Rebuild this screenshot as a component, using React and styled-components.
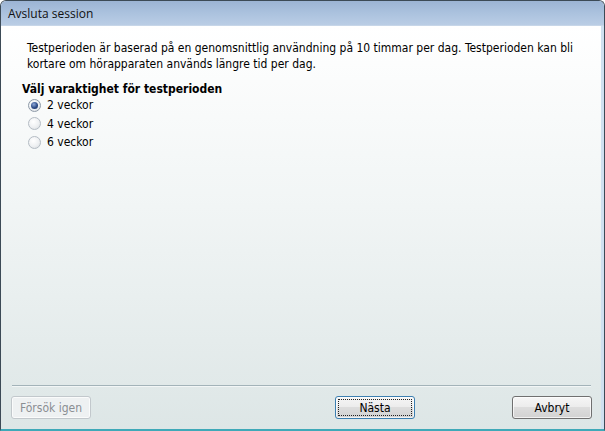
import React from "react";
import styled, { createGlobalStyle } from "styled-components";

const Global = createGlobalStyle`
  html, body { margin: 0; padding: 0; background: #ffffff; }
  body { width: 605px; height: 431px; overflow: hidden; }
  #root { width: 605px; height: 431px; }
`;

const Window = styled.div`
  box-sizing: border-box;
  width: 605px;
  height: 431px;
  display: flex;
  flex-direction: column;
  border: 1px solid #3c4a56;
  border-bottom: 2px solid #3fa9b8;
  border-radius: 6px 6px 0 0;
  overflow: hidden;
  font-family: "DejaVu Sans Condensed", "DejaVu Sans", sans-serif;
  font-size: 12px;
  color: #000;
`;

const TitleBar = styled.div`
  height: 24px;
  flex: none;
  display: flex;
  align-items: center;
  padding-left: 7px;
  background: linear-gradient(to bottom, #9cb4d4 0%, #abc2de 50%, #bacde5 100%);
  font-family: "Open Sans", "Noto Sans", sans-serif;
  font-size: 12px;
  color: #111;
  border-bottom: 1px solid #c7d6e8;
`;

const Body = styled.div`
  flex: 1;
  display: flex;
  flex-direction: column;
  background: linear-gradient(to bottom, #ffffff 0%, #f1f5f5 45%, #dde6e6 100%);
  border-right: 3px solid #cfe0f0;
`;

const Content = styled.div`
  flex: 1;
  padding: 14px 12px 0 21px;
`;

const Intro = styled.p`
  margin: 0 0 0 5px;
  line-height: 16px;
`;

const Heading = styled.div`
  margin-top: 9px;
  font-weight: bold;
  line-height: 16px;
`;

const Options = styled.div`
  display: grid;
  grid-auto-rows: 18.5px;
  margin-top: -1px;
  padding-left: 6px;
`;

const Option = styled.label`
  display: flex;
  align-items: center;
  gap: 6px;
`;

const Radio = styled.span`
  box-sizing: border-box;
  width: 13px;
  height: 13px;
  border-radius: 50%;
  border: 1px solid ${(p) => (p.$checked ? "#8e9aa8" : "#b4bcc4")};
  background: radial-gradient(circle at 40% 35%, #ffffff 0%, #eef0f2 55%, #d4d8dc 100%);
  display: flex;
  align-items: center;
  justify-content: center;
  &::after {
    content: "";
    width: 7px;
    height: 7px;
    border-radius: 50%;
    display: ${(p) => (p.$checked ? "block" : "none")};
    background: radial-gradient(circle at 40% 35%, #8ea8d8 0%, #2c4a86 55%, #1c2f5c 100%);
  }
`;

const Footer = styled.div`
  padding: 0 9px 10px 10px;
`;

const Separator = styled.div`
  height: 1px;
  background: #a3b3b9;
  border-bottom: 1px solid #f2f6f6;
  margin: 0 1px 9px 1px;
`;

const ButtonRow = styled.div`
  display: flex;
  align-items: center;
`;

const Button = styled.button`
  box-sizing: border-box;
  position: relative;
  width: 80px;
  height: 23px;
  border-radius: 3px;
  border: 1px solid ${(p) => (p.disabled ? "#c2c8cc" : p.$default ? "#3c7fb1" : "#707070")};
  background: ${(p) =>
    p.disabled
      ? "#eef1f2"
      : "linear-gradient(to bottom, #f6f6f6 0%, #ececec 48%, #dddddd 50%, #d2d2d2 100%)"};
  color: ${(p) => (p.disabled ? "#8a8e92" : "#000")};
  font-family: "DejaVu Sans Condensed", "DejaVu Sans", sans-serif;
  font-size: 12px;
  padding: 0;
  margin-left: ${(p) => p.$ml || "0"};
  box-shadow: inset 0 0 0 1px rgba(255, 255, 255, 0.7);
  &::after {
    content: "";
    display: ${(p) => (p.$default ? "block" : "none")};
    position: absolute;
    inset: 2px;
    border: 1px dotted #222;
  }
`;

const Spacer = styled.div`
  flex: 1;
`;

export default function App() {
  const options = ["2 veckor", "4 veckor", "6 veckor"];
  return (
    <>
      <Global />
      <Window>
        <TitleBar>Avsluta session</TitleBar>
        <Body>
          <Content>
            <Intro>
              Testperioden är baserad på en genomsnittlig användning på 10 timmar per dag. Testperioden kan bli
              kortare om hörapparaten används längre tid per dag.
            </Intro>
            <Heading>Välj varaktighet för testperioden</Heading>
            <Options>
              {options.map((o, i) => (
                <Option key={o}>
                  <Radio $checked={i === 0} />
                  {o}
                </Option>
              ))}
            </Options>
          </Content>
          <Footer>
            <Separator />
            <ButtonRow>
              <Button disabled>Försök igen</Button>
              <Spacer />
              <Button $default>Nästa</Button>
              <Button $ml="97px">Avbryt</Button>
            </ButtonRow>
          </Footer>
        </Body>
      </Window>
    </>
  );
}
